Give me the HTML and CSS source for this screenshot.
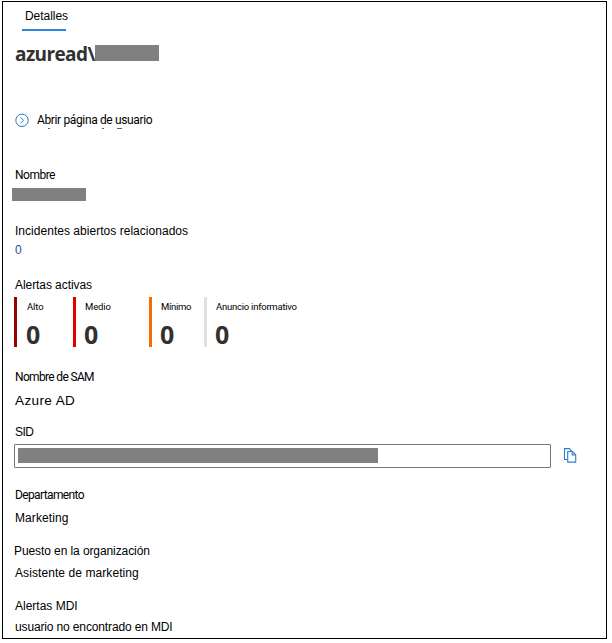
FILE: index.html
```html
<!DOCTYPE html>
<html lang="es">
<head>
<meta charset="utf-8">
<title>Detalles</title>
<link rel="stylesheet" href="styles.css">
</head>
<body>
<main class="panel">
  <nav class="tabs"><span class="tab"><span class="t-tab">Detalles</span></span></nav>
  <h1 class="title"><span class="t-title">azuread\</span><span class="mask mask-title"></span></h1>
  <div class="action">
    <svg class="go" width="14" height="14" viewBox="0 0 14 14" fill="none" stroke="#2478c8"><circle cx="7" cy="7.3" r="6.2"/><path d="M5.5 4.3L8.5 7.3L5.5 10.3"/></svg>
    <span class="t-open">Abrir página de usuario</span>
  </div>
  <svg class="clipped" width="90" height="2" viewBox="0 0 90 2" stroke="#48639b"><path d="M4 1.5h2M58 1.5h2M73 1.5h5"/></svg>
  <section class="field name">
    <div class="line"><span class="t-name">Nombre</span></div>
    <div class="mask mask-name"></div>
  </section>
  <section class="field incidents">
    <div class="line"><span class="t-inc">Incidentes abiertos relacionados</span></div>
    <a class="line link">0</a>
  </section>
  <section class="field alerts">
    <div class="line"><span class="t-act">Alertas activas</span></div>
    <div class="cards">
      <div class="card high"><span class="level t-high">Alto</span><b>0</b></div>
      <div class="card medium"><span class="level t-med">Medio</span><b>0</b></div>
      <div class="card low"><span class="level t-low">Mínimo</span><b>0</b></div>
      <div class="card info"><span class="level t-info">Anuncio informativo</span><b>0</b></div>
    </div>
  </section>
  <section class="field sam">
    <div class="line"><span class="t-sam">Nombre de SAM</span></div>
    <div class="line azure"><span class="t-azure">Azure AD</span></div>
  </section>
  <section class="field sid">
    <div class="line"><span class="t-sid">SID</span></div>
    <div class="sid-row">
      <div class="box"><span class="mask mask-sid"></span></div>
      <svg class="copy" width="14" height="15" viewBox="0 0 14 15" fill="none" stroke="#2b7fce" stroke-width="1.1"><path d="M4 11.5H1.5V.6h4.9L9 3.3"/><path d="M4.7 3.5h4.7l3.3 3.3v7.3h-8z" fill="#fff"/><path d="M9.2 3.5V7h3.5"/></svg>
    </div>
  </section>
  <section class="field dept">
    <div class="line"><span class="t-dept">Departamento</span></div>
    <div class="line"><span class="t-mkt">Marketing</span></div>
  </section>
  <section class="field job">
    <div class="line job-label"><span class="t-job">Puesto en la organización</span></div>
    <div class="line"><span class="t-asis">Asistente de marketing</span></div>
  </section>
  <section class="field mdi">
    <div class="line"><span class="t-mdi">Alertas MDI</span></div>
    <div class="line"><span class="t-user">usuario no encontrado en MDI</span></div>
  </section>
</main>
</body>
</html>
```
FILE: styles.css
```css
* { box-sizing: border-box; }
body { margin: 0; background: #fff; color: #000; font: 12px/16px "Liberation Sans", Arial, sans-serif; }
.panel { width: 605px; height: 638px; margin: 1px 0 0 2px; border: 1px solid #000; padding-left: 12px; overflow: hidden; white-space: nowrap; }
.tabs { height: 29px; padding: 6px 0 0 7px; display: flex; }
.tab { width: 44px; height: 23px; padding-left: 3px; border-bottom: 2px solid #2b88d8; }
.title { display: flex; margin: 9px 0 0; height: 28px; font: bold 19px/28px "Open Sans", sans-serif; color: #323130; }
.t-tab { letter-spacing: -.05px; }
.t-title { width: 80px; letter-spacing: -.6px; }
.mask { display: block; background: #808080; }
.mask-title { width: 64px; height: 16px; margin-top: 5px; }
.action { display: flex; margin-top: 44px; height: 16px; }
.go { margin: 1px 8px 0 0; }
.t-open { font: 12px/16px Roboto, sans-serif; letter-spacing: -.36px; }
.clipped { display: block; margin: -1px 0 0 29px; }
.line { height: 16px; display: block; }
.name { margin-top: 38px; }
.t-name { font: 12px/16px Roboto, sans-serif; letter-spacing: -.5px; }
.mask-name { width: 74px; height: 13px; margin: 5px 0 0 -3px; }
.incidents { margin-top: 22px; }
.t-inc { letter-spacing: .03px; }
.link { margin-top: 3px; color: #294d80; }
.alerts { margin-top: 19px; }
.t-act { letter-spacing: -.07px; }
.cards { display: grid; grid-template-columns: 59px 76px 55px 120px; height: 50px; margin: 4px 0 0 -1px; }
.card { border-left: 3px solid; padding-left: 9px; height: 50px; }
.level { display: block; height: 20px; padding-left: 1px; font: 9.5px/20px Roboto, sans-serif; letter-spacing: -.12px; }
.card b { display: block; font: bold 25px/34px "Open Sans", sans-serif; color: #323130; }
.t-info { letter-spacing: -.24px; }
.t-low { letter-spacing: -.3px; }
.high { border-color: #990000; }
.medium { border-color: #e00000; padding-left: 8px; }
.low { border-color: #f76b00; padding-left: 8px; }
.info { border-color: #e1e1e1; padding-left: 8px; }
.sam { margin-top: 22px; }
.t-sam { font: 12px/16px Roboto, sans-serif; letter-spacing: -.66px; }
.azure { margin-top: 8px; font-size: 13.5px; }
.t-azure { letter-spacing: .4px; }
.sid { margin-top: 15px; }
.t-sid { letter-spacing: -.6px; }
.sid-row { display: flex; margin: 4px 0 0 -1px; }
.box { width: 537px; height: 24px; border: 1px solid #777; border-radius: 1px; padding: 3px; }
.mask-sid { width: 360px; height: 15px; }
.copy { margin: 4px 0 0 12px; }
.dept { margin-top: 19px; }
.t-dept { font: 12px/16px Roboto, sans-serif; letter-spacing: -.63px; }
.t-mkt { letter-spacing: .1px; }
.dept .line + .line { margin-top: 7px; }
.job { margin-top: 17px; }
.job-label { margin-left: -1px; }
.t-job { letter-spacing: -.09px; }
.t-asis { letter-spacing: .08px; }
.job .line + .line { margin-top: 6px; }
.mdi { margin-top: 17px; }
.t-user { letter-spacing: -.14px; }
.mdi .line + .line { margin-top: 5px; }
```
